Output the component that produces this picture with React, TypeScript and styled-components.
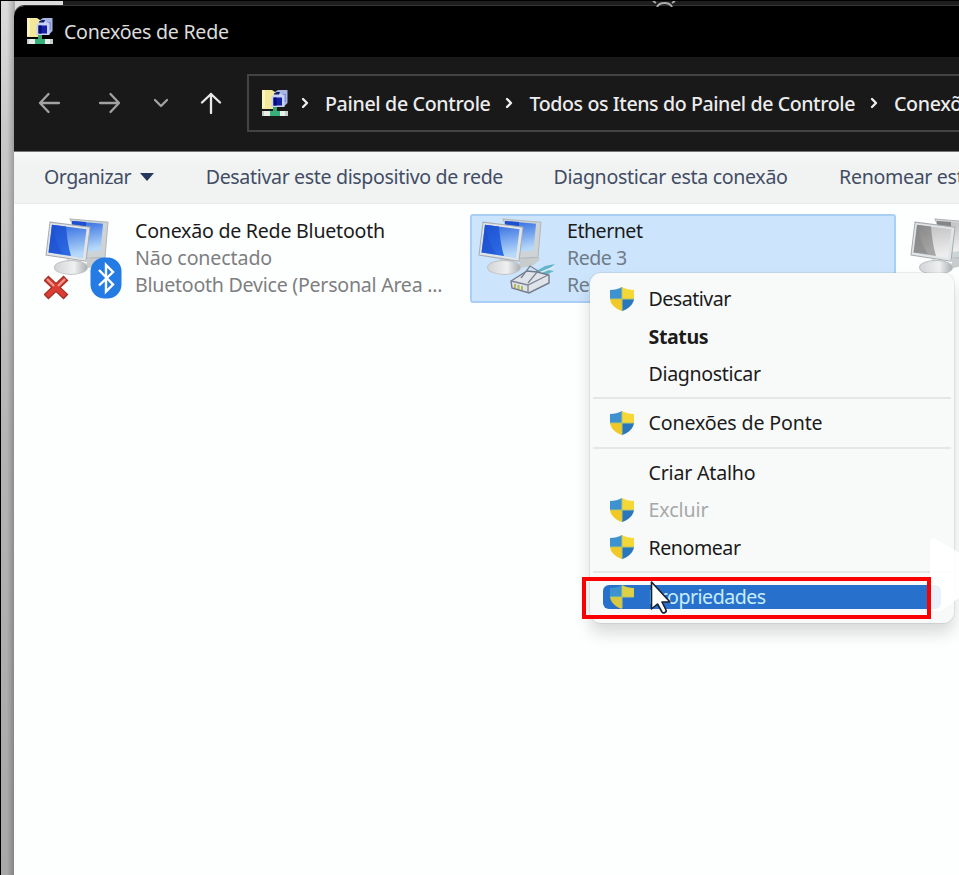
import React from 'react';
import styled, { createGlobalStyle } from 'styled-components';

const Global = createGlobalStyle`
  * { box-sizing: border-box; }
  body { margin: 0; overflow: hidden; font-family: "Noto Sans", "Open Sans", sans-serif; }
`;

const Desktop = styled.div`
  position: relative;
  width: 959px;
  height: 875px;
  overflow: hidden;
  padding: 6px 0 0 13px;
  border-left: 1px solid #000;
  background:
    linear-gradient(#000, #000) 0 0 / 100% 1px no-repeat,
    linear-gradient(#3c3c3c, #3c3c3c) 62px 5px / 100% 1px no-repeat,
    linear-gradient(#1e1e1e, #1e1e1e) 62px 0 / 100% 6px no-repeat,
    linear-gradient(90deg, transparent 6px, rgba(0, 0, 0, 0.09) 9px, rgba(0, 0, 0, 0.22) 13px) 0 0 / 14px 100% no-repeat,
    linear-gradient(#dcdcdc 0, #c9c9c9 130px, #b4b4b4 450px, #a8a8a8 875px);
`;

const Gear = styled.svg`
  position: absolute;
  left: 650px;
  top: 1px;
`;

const Window = styled.div`
  display: flex;
  flex-direction: column;
  height: 869px;
  overflow: hidden;
  background: #fdfefe;
  border-radius: 10px 0 0 0;
  box-shadow: 0 -1px 0 #343434;
`;

const TitleBar = styled.header`
  display: flex;
  align-items: center;
  gap: 11px;
  height: 51px;
  padding: 0 0 1px 13px;
  background: #000;
`;

const NavBar = styled.nav`
  display: flex;
  align-items: center;
  height: 95px;
  padding-bottom: 2px;
  background: #191919;
  border-bottom: 1px solid #777;
`;

const NavIcon = styled.svg<{ $ml: number; $c: string }>`
  flex: none;
  margin-left: ${p => p.$ml}px;
  fill: none;
  stroke: ${p => p.$c};
  stroke-width: 2.3;
  stroke-linecap: round;
  stroke-linejoin: round;
`;

const Address = styled.div`
  display: flex;
  align-items: center;
  flex: none;
  width: 730px;
  height: 58px;
  margin-left: 25px;
  padding: 0 0 0 13px;
  border: 2px solid #434343;
`;

const Label = styled.span<{ $c?: string; $ls?: number; $ml?: number; $w?: number }>`
  flex: none;
  font-size: 19.6px;
  line-height: 27px;
  white-space: nowrap;
  font-weight: ${p => p.$w ?? 400};
  color: ${p => p.$c ?? '#1b1b1b'};
  letter-spacing: ${p => p.$ls ?? -0.5}px;
  margin-left: ${p => p.$ml ?? 0}px;
`;

const CommandBar = styled.div`
  display: flex;
  align-items: center;
  height: 52px;
  padding: 0 0 3px 30px;
  background: linear-gradient(#f7f8f8, #f1f3f3 12px);
  border-bottom: 1px solid #e9ebeb;
`;

const Caret = styled.svg`
  flex: none;
  margin: 1px 0 0 9px;
`;

const Connections = styled.main`
  display: flex;
  flex: 1;
  padding: 10px 0 0 24px;
  align-items: flex-start;
`;

const Connection = styled.section<{ $selected?: boolean; $w: number; $pad?: number }>`
  display: flex;
  flex: none;
  width: ${p => p.$w}px;
  height: 89px;
  padding: 1px 0 0 ${p => p.$pad ?? 6}px;
  border: 2px solid ${p => (p.$selected ? '#a9cff5' : 'transparent')};
  border-radius: 3px;
  background: ${p => (p.$selected ? '#cce5fc' : 'transparent')};
`;

const Picture = styled.svg<{ $gap?: number }>`
  flex: none;
  margin-right: ${p => p.$gap ?? 9}px;
`;

const Details = styled.div`
  display: flex;
  flex-direction: column;
`;

const Menu = styled.div`
  position: absolute;
  left: 589px;
  top: 273px;
  width: 364px;
  height: 350px;
  padding: 7px 3px;
  background: #f8faf9;
  border-radius: 11px;
  box-shadow: 0 0 0 1px rgba(0, 0, 0, 0.06), 0 10px 16px rgba(0, 0, 0, 0.15);
`;

const Item = styled.div`
  display: flex;
  align-items: center;
  height: 37.4px;
  padding-left: 15.5px;
`;

const Slot = styled.div`
  flex: none;
  width: 40px;
  height: 26px;
`;

const Separator = styled.hr`
  height: 2px;
  margin: 5px 0;
  border: 0;
  background: #e5e7e6;
`;

const Highlight = styled.div`
  display: flex;
  align-items: center;
  width: 338px;
  height: 24px;
  margin: 12px 0 0 10px;
  padding-left: 5.5px;
  border-radius: 6px;
  overflow: hidden;
  background: #2770cb;
`;

const PlayMark = styled.svg`
  position: absolute;
  left: 929px;
  top: 537px;
`;

const RedFrame = styled.div`
  position: absolute;
  left: 581px;
  top: 577px;
  width: 349px;
  height: 42px;
  border: 4px solid #fb0000;
`;

const Pointer = styled.svg`
  position: absolute;
  left: 648px;
  top: 580px;
`;

const FolderArt = styled.svg`
  flex: none;
`;

const NetFolder = () => (
  <FolderArt width="26" height="28" viewBox="0 0 26 28">
    <path d="M0 1h10l3 2v17H0z" fill="#f3e79b" />
    <path d="M0 1h3v18H0z" fill="#fbf4bb" />
    <path d="M13 3l3-2h9.500v13l-3 3H13z" fill="#a6b5e4" />
    <path d="M19 5h5v8h-5z" fill="#8392d8" />
    <path d="M9.500 8l3-3.500h6l4 2V18h-13z" fill="#c8d2f2" />
    <path d="M11.500 8.500h8.500V16.500h-8.500z" fill="#151fa8" />
    <path d="M11.500 8.500h3v8h-3z" fill="#080b70" />
    <path d="M12 4.500l3-1.500h3l-1 2.500h-5z" fill="#111b62" />
    <path d="M11 18h4v5h-4z" fill="#3ca46d" />
    <path d="M0 22h26v5H0z" fill="#e9eeeb" />
    <path d="M8 22h10v5H8z" fill="#37b079" />
    <path d="M0 22h2v5H0zM23 22h3v5h-3z" fill="#c6ceca" />
  </FolderArt>
);

const Shield = ({ selected }: { selected?: boolean }) => {
  const blue = selected ? '#3c93d0' : '#3d92cf';
  const low = selected ? '#2770cb' : '#2876bc';
  return (
    <svg width="26" height="26" viewBox="0 0 26 26">
      <path d="M13 1C10 3 5 4 1 4v9h12z" fill={blue} />
      <path d="M13 1c3 2 8 3 12 3v9H13z" fill={selected ? '#dfd046' : '#f5d736'} />
      <path d="M1 13c1 6 6 10 12 12V13z" fill={selected ? '#d9c840' : '#f1c927'} />
      <path d="M25 13c-1 6-6 10-12 12V13z" fill={low} />
      <path d="M13 2v22M1.500 13h23" stroke="#b5c570" strokeWidth="1" />
    </svg>
  );
};

const Monitors = ({ id, gray }: { id: string; gray?: boolean }) => {
  const dark = gray ? '#858585' : '#1d4fd0';
  const mid = gray ? '#a6a6a6' : '#2c69e2';
  const light = gray ? '#ededed' : '#b6d9fa';
  return (
    <g transform="translate(0 1) scale(1 1.03)">
      <defs>
        <linearGradient id={id + 's'} x1="0" y1="0" x2="0.2" y2="1">
          <stop offset="0" stopColor={gray ? '#bdbdbd' : '#2865df'} />
          <stop offset="1" stopColor={light} />
        </linearGradient>
        <linearGradient id={id + 'd'} x1="0" y1="0" x2="0.5" y2="1">
          <stop offset="0" stopColor={dark} />
          <stop offset="1" stopColor={mid} />
        </linearGradient>
        <linearGradient id={id + 'b'} x1="0" y1="0" x2="1" y2="0">
          <stop offset="0" stopColor="#d2d4d6" />
          <stop offset="0.6" stopColor="#eff0f0" />
          <stop offset="1" stopColor="#a9adb0" />
        </linearGradient>
      </defs>
      <path d="M42 40l16-5 4 5-7 6-14 3z" fill="#c9cccd" />
      <path d="M25 1l38 3-3 34-18 1z" fill="#ced3d6" stroke="#b1b6ba" strokeWidth="1" />
      <path d="M27 3l31 2.500-2.500 26-14 1.500z" fill={'url(#' + id + 's)'} />
      <path d="M27 3l14 1v7H27z" fill={dark} />
      <path d="M22 40l14 2 1 7H21z" fill="#c5c8ca" />
      <ellipse cx="26" cy="48" rx="16.500" ry="6.800" fill={'url(#' + id + 'b)'} stroke="#c1c4c6" strokeWidth="1" />
      <path d="M5 4l40 5-4 33L1 36z" fill="#e2e5e7" stroke="#a7acb0" strokeWidth="1" />
      <path d="M7 6.500l34.500 4.500-3.500 28L3.500 33.500z" fill={'url(#' + id + 's)'} />
      <path d="M7 6.500l14 1.800c1 10 2 19 5 28.700L3.500 33.500z" fill={'url(#' + id + 'd)'} />
      <path d="M8 8c1 10 5 20 10 27L3.500 33.500z" fill={dark} opacity="0.55" />
    </g>
  );
};

type Entry = { t: string; s?: boolean; w?: number; c?: string; ls: number };

const menuTop: Entry[] = [
  { t: 'Desativar', s: true, ls: -0.5 },
  { t: 'Status', w: 700, ls: -0.4 },
  { t: 'Diagnosticar', ls: -0.35 },
];
const menuBridge: Entry[] = [{ t: 'Conexões de Ponte', s: true, ls: -0.15 }];
const menuLower: Entry[] = [
  { t: 'Criar Atalho', ls: -0.2 },
  { t: 'Excluir', s: true, c: '#a6a8a8', ls: -0.1 },
  { t: 'Renomear', s: true, ls: -0.45 },
];

const Entries = ({ list }: { list: Entry[] }) => (
  <>
    {list.map(e => (
      <Item key={e.t}>
        <Slot>{e.s && <Shield />}</Slot>
        <Label $ls={e.ls} $w={e.w} $c={e.c}>{e.t}</Label>
      </Item>
    ))}
  </>
);

const Crumb = ({ ml }: { ml: number }) => (
  <NavIcon $ml={ml} $c="#f0f0f0" width="8" height="12" viewBox="0 0 8 12">
    <path d="M2 2l4 4-4 4" />
  </NavIcon>
);

export default function App() {
  return (
    <>
      <Global />
      <Desktop>
        <Gear width="26" height="6" viewBox="0 0 26 6">
          <path d="M6 6a8 6 0 0 1 15 0M2 0l3 2M24 0l-3 2" fill="none" stroke="#aaa" strokeWidth="2" />
        </Gear>
        <Window>
          <TitleBar>
            <NetFolder />
            <Label $c="#dcdcdc" $ls={-0.26}>Conexões de Rede</Label>
          </TitleBar>
          <NavBar>
            <NavIcon $ml={24} $c="#a2a2a2" width="23" height="22" viewBox="0 0 23 22">
              <path d="M21 11H2M10.500 2L2 11l8.500 9" />
            </NavIcon>
            <NavIcon $ml={37} $c="#a2a2a2" width="23" height="22" viewBox="0 0 23 22">
              <path d="M2 11h19M12.500 2L21 11l-8.500 9" />
            </NavIcon>
            <NavIcon $ml={31} $c="#a2a2a2" width="18" height="12" viewBox="0 0 18 12">
              <path d="M3 3l6 6 6-6" />
            </NavIcon>
            <NavIcon $ml={30} $c="#e8e8e8" width="22" height="22" viewBox="0 0 22 22">
              <path d="M11 21V2M2 10.500L11 2l9 8.500" />
            </NavIcon>
            <Address>
              <NetFolder />
              <Crumb ml={13} />
              <Label $ml={16} $c="#ececec" $w={500} $ls={-0.33}>Painel de Controle</Label>
              <Crumb ml={14} />
              <Label $ml={17} $c="#ececec" $w={500} $ls={-0.41}>Todos os Itens do Painel de Controle</Label>
              <Crumb ml={15} />
              <Label $ml={16} $c="#ececec" $w={500} $ls={-0.33}>Conexões de Rede</Label>
            </Address>
          </NavBar>
          <CommandBar>
            <Label $c="#424d65">Organizar</Label>
            <Caret width="14" height="8" viewBox="0 0 14 8"><path d="M0 0h14L7 8z" fill="#26365d" /></Caret>
            <Label $ml={51.5} $c="#424d65" $ls={-0.36}>Desativar este dispositivo de rede</Label>
            <Label $ml={50.5} $c="#424d65" $ls={-0.33}>Diagnosticar esta conexão</Label>
            <Label $ml={51.5} $c="#424d65" $ls={-0.33}>Renomear esta conexão</Label>
          </CommandBar>
          <Connections>
            <Connection $w={432} $pad={4}>
              <Picture $gap={11} width="80" height="84" viewBox="-1 0 80 84">
                <Monitors id="a" />
                <path d="M1 61l20 19M21 61L1 80" stroke="#9f3028" strokeWidth="7" />
                <path d="M2 62l18 17M20 62L2 79" stroke="#dc3d32" strokeWidth="4.500" />
                <path d="M2 62l7 7M20 62l-7 7" stroke="#ef9a91" strokeWidth="2" />
                <rect x="45.500" y="40.500" width="31" height="41" rx="14" fill="#257be4" />
                <path d="M54 53l14 14.500-7 7V48l7 7-14 13.500" fill="none" stroke="#fff" strokeWidth="2.400" />
              </Picture>
              <Details>
                <Label $ls={-0.24}>Conexão de Rede Bluetooth</Label>
                <Label $c="#7d7f80" $ls={-0.12}>Não conectado</Label>
                <Label $c="#7d7f80" $ls={-0.25}>Bluetooth Device (Personal Area ...</Label>
              </Details>
            </Connection>
            <Connection $w={426} $pad={5} $selected>
              <Picture $gap={10} width="80" height="84" viewBox="-1 0 80 84">
                <Monitors id="b" />
                <path d="M55 56l12-7 10-2-7 6 6 1-12 6z" fill="#64b5cb" />
                <path d="M59 57l17-7" stroke="#dceff5" strokeWidth="1.500" />
                <path d="M33 64l16-10 10 1 12 3v8L51 76 34 71z" fill="#dfe3ea" stroke="#747b88" strokeWidth="1.400" />
                <path d="M33 64l17 4 20-10M50 68v8M43 61l9-12 8 5-10 12" fill="none" stroke="#7d8490" strokeWidth="1.300" />
                <path d="M37 67v4M40.500 68v4M44 69v4" stroke="#b3b95c" strokeWidth="2" />
              </Picture>
              <Details>
                <Label>Ethernet</Label>
                <Label $c="#6f7c88">Rede 3</Label>
                <Label $c="#6f7c88">Realtek</Label>
              </Details>
            </Connection>
            <Connection $w={150} $pad={11}>
              <Picture width="80" height="84" viewBox="-1 0 80 84"><Monitors id="c" gray /></Picture>
            </Connection>
          </Connections>
        </Window>
        <Menu>
          <Entries list={menuTop} />
          <Separator />
          <Entries list={menuBridge} />
          <Separator />
          <Entries list={menuLower} />
          <Separator />
          <Highlight>
            <Slot><Shield selected /></Slot>
            <Label $c="#c8edff">Propriedades</Label>
          </Highlight>
        </Menu>
        <PlayMark width="30" height="76" viewBox="0 0 30 76">
          <path d="M0 6Q0 1 5 2l25 14v44L12 73.500H0z" fill="#fff" opacity="0.9" />
        </PlayMark>
        <RedFrame />
        <Pointer width="24" height="36" viewBox="0 0 24 36">
          <path d="M2.500 2v27l6-5 4.500 8c1.500 2 5 0 4-2l-4-8h8z" fill="#fff" stroke="#171e30" strokeWidth="1.600" strokeLinejoin="round" />
        </Pointer>
      </Desktop>
    </>
  );
}
